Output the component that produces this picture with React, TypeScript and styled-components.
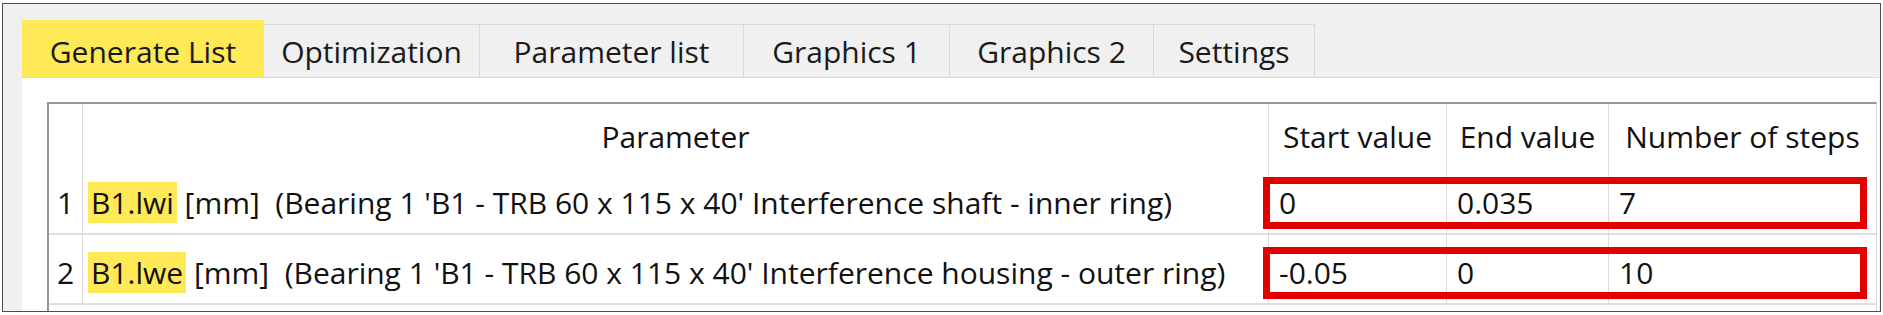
import * as React from 'react';
import styled, { createGlobalStyle } from 'styled-components';

const GlobalStyle = createGlobalStyle`
    html, body {
        margin: 0;
        padding: 0;
        background: #ffffff;
    }
    body {
        font-family: "Open Sans", "Noto Sans", sans-serif;
        color: #111;
    }
`;

const tabs = [
    { label: 'Generate List', width: 242, active: true },
    { label: 'Optimization', width: 217 },
    { label: 'Parameter list', width: 265 },
    { label: 'Graphics 1', width: 207 },
    { label: 'Graphics 2', width: 205 },
    { label: 'Settings', width: 162 },
];

const rows = [
    {
        no: 1,
        name: 'B1.lwi',
        desc: " [mm]  (Bearing 1 'B1 - TRB 60 x 115 x 40' Interference shaft - inner ring)",
        start: '0',
        end: '0.035',
        steps: '7',
    },
    {
        no: 2,
        name: 'B1.lwe',
        desc: " [mm]  (Bearing 1 'B1 - TRB 60 x 115 x 40' Interference housing - outer ring)",
        start: '-0.05',
        end: '0',
        steps: '10',
    },
];

export default class App extends React.Component<any, {}> {
    render() {
        return (
            <>
                <GlobalStyle />
                <Frame>
                    <TabStrip>
                        {tabs.map((t) => (
                            <Tab key={t.label} $w={t.width} $active={!!t.active}>
                                {t.label}
                            </Tab>
                        ))}
                    </TabStrip>
                    <Panel>
                        <Table>
                            <HeadCell />
                            <HeadCell>Parameter</HeadCell>
                            <HeadCell>Start value</HeadCell>
                            <HeadCell>End value</HeadCell>
                            <HeadCell $last>Number of steps</HeadCell>

                            {rows.map((r, i) => (
                                <React.Fragment key={r.no}>
                                    <NoCell $row={i + 2}>{r.no}</NoCell>
                                    <ParamCell $row={i + 2}>
                                        <Mark>{r.name}</Mark>
                                        {r.desc}
                                    </ParamCell>
                                    <ValueCell $row={i + 2} $col={3}>{r.start}</ValueCell>
                                    <ValueCell $row={i + 2} $col={4}>{r.end}</ValueCell>
                                    <ValueCell $row={i + 2} $col={5} $last>{r.steps}</ValueCell>
                                    <RedBox $row={i + 2} />
                                </React.Fragment>
                            ))}
                        </Table>
                    </Panel>
                </Frame>
            </>
        );
    }
}

const Frame = styled.div`
    box-sizing: border-box;
    margin: 3px 0 0 2px;
    width: 1879px;
    height: 309px;
    border: 1px solid #4d4d4d;
    background: #f0f0f0;
    padding: 16px 1px 0 19px;
    display: flex;
    flex-direction: column;
    overflow: hidden;
`;

const TabStrip = styled.div`
    display: flex;
    align-items: flex-end;
    height: 57px;
    flex: none;
`;

const Tab = styled.div<{ $w: number; $active: boolean }>`
    box-sizing: border-box;
    width: ${(p) => p.$w}px;
    height: ${(p) => (p.$active ? 57 : 53)}px;
    margin-right: -1px;
    display: flex;
    align-items: center;
    justify-content: center;
    padding-top: ${(p) => (p.$active ? 4 : 0)}px;
    font-size: 30px;
    color: #1a1a1a;
    background: ${(p) => (p.$active ? '#ffe956' : '#f0f0f0')};
    border: 1px solid ${(p) => (p.$active ? '#ffe956' : '#d9d9d9')};
    border-bottom: none;
    position: relative;
    z-index: ${(p) => (p.$active ? 1 : 0)};
`;

const Panel = styled.div`
    flex: 1;
    background: #ffffff;
    border-top: 1px solid #d9d9d9;
    padding: 24px 0 0 25px;
`;

const Table = styled.div`
    display: grid;
    grid-template-columns: 34px 1186px 178px 162px 267px;
    grid-template-rows: 61px 70px 70px 30px;
    width: 1830px;
    box-sizing: border-box;
    border-top: 2px solid #969696;
    border-left: 2px solid #969696;
    border-right: 1px solid #d6d6d6;
    font-size: 30px;
    color: #111;
`;

const HeadCell = styled.div<{ $last?: boolean }>`
    grid-row: 1;
    display: flex;
    align-items: center;
    justify-content: center;
    padding-top: 4px;
    white-space: pre;
    border-right: ${(p) => (p.$last ? 'none' : '1px solid #dcdcdc')};
`;

const BodyCell = styled.div<{ $row: number; $last?: boolean }>`
    grid-row: ${(p) => p.$row};
    box-sizing: border-box;
    display: flex;
    align-items: center;
    padding-top: 6px;
    white-space: pre;
    border-right: ${(p) => (p.$last ? 'none' : '1px solid #dcdcdc')};
    border-bottom: 2px solid #dedede;
`;

const NoCell = styled(BodyCell)`
    grid-column: 1;
    padding-left: 8px;
`;

const ParamCell = styled(BodyCell)`
    grid-column: 2;
    padding-left: 5px;
`;

const ValueCell = styled(BodyCell)<{ $col: number }>`
    grid-column: ${(p) => p.$col};
    padding-left: 10px;
`;

const Mark = styled.span`
    background: #ffe956;
    padding: 0 3px;
`;

const RedBox = styled.div<{ $row: number }>`
    grid-row: ${(p) => p.$row};
    grid-column: 3 / 6;
    align-self: center;
    box-sizing: border-box;
    height: 52px;
    margin: 5px 9px 0 -6px;
    border: 7px solid #e30000;
    pointer-events: none;
`;
